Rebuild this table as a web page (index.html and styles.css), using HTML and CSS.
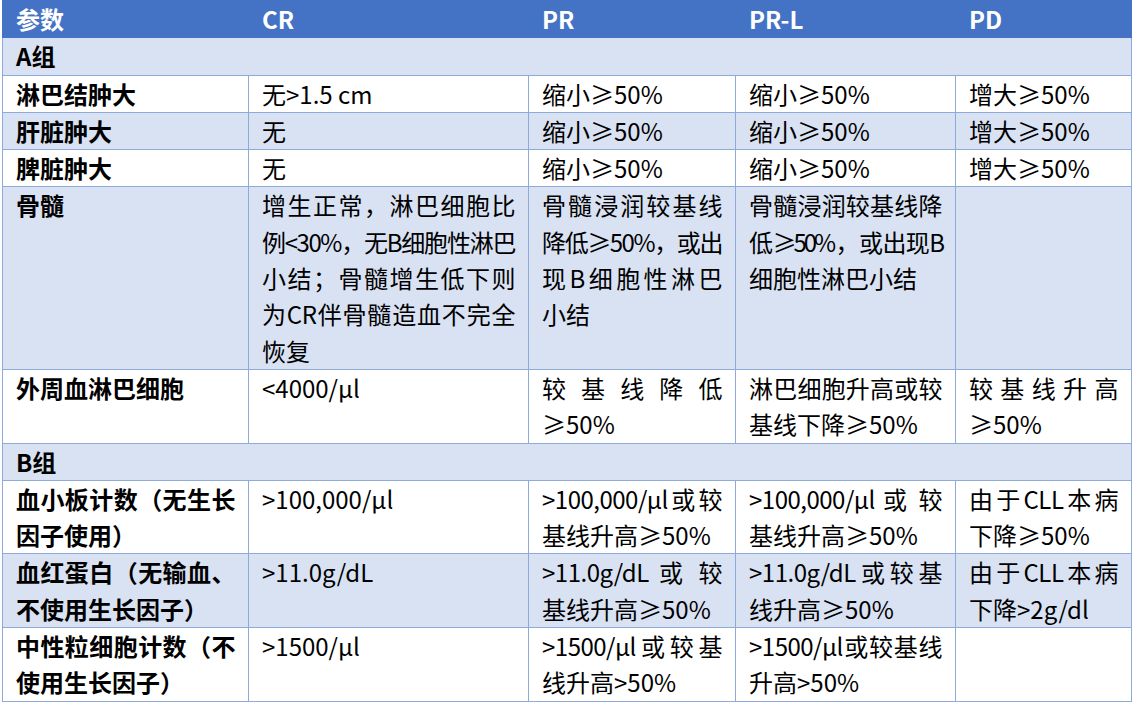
FILE: index.html
```html
<!DOCTYPE html>
<html lang="zh-CN">
<head>
<meta charset="utf-8">
<title>CLL 疗效标准</title>
<link rel="stylesheet" href="styles.css">
</head>
<body>
<table class="crit">
  <colgroup>
    <col class="c1"><col class="c2"><col class="c3"><col class="c4"><col class="c5">
  </colgroup>
  <thead>
    <tr><th>参数</th><th>CR</th><th>PR</th><th>PR-L</th><th>PD</th></tr>
  </thead>
  <tbody>
    <tr class="group"><td colspan="5">A组</td></tr>
    <tr><th>淋巴结肿大</th><td>无&gt;1.5 cm</td><td>缩小≥50%</td><td>缩小≥50%</td><td>增大≥50%</td></tr>
    <tr><th>肝脏肿大</th><td>无</td><td>缩小≥50%</td><td>缩小≥50%</td><td>增大≥50%</td></tr>
    <tr><th>脾脏肿大</th><td>无</td><td>缩小≥50%</td><td>缩小≥50%</td><td>增大≥50%</td></tr>
    <tr>
      <th>骨髓</th>
      <td><span class="l">增生正常，淋巴细胞比</span><span class="l t">例&lt;30%，无B细胞性淋巴</span><span class="l">小结；骨髓增生低下则</span><span class="l">为CR伴骨髓造血不完全</span><span class="l">恢复</span></td>
      <td><span class="l">骨髓浸润较基线</span><span class="l t">降低≥50%，或出</span><span class="l">现B细胞性淋巴</span><span class="l">小结</span></td>
      <td><span class="l">骨髓浸润较基线降</span><span class="l tt">低≥50%，或出现B</span><span class="l">细胞性淋巴小结</span></td>
      <td></td>
    </tr>
    <tr>
      <th>外周血淋巴细胞</th>
      <td>&lt;4000/μl</td>
      <td><span class="l">较基线降低</span><span class="l">≥50%</span></td>
      <td><span class="l">淋巴细胞升高或较</span><span class="l">基线下降≥50%</span></td>
      <td><span class="l">较基线升高</span><span class="l">≥50%</span></td>
    </tr>
    <tr class="group"><td colspan="5">B组</td></tr>
    <tr>
      <th><span class="l">血小板计数（无生长</span><span class="l">因子使用）</span></th>
      <td>&gt;100,000/μl</td>
      <td><span class="l">&gt;100,000/μl或较</span><span class="l">基线升高≥50%</span></td>
      <td><span class="l">&gt;100,000/μl 或 较</span><span class="l">基线升高≥50%</span></td>
      <td><span class="l">由于CLL本病</span><span class="l">下降≥50%</span></td>
    </tr>
    <tr>
      <th><span class="l">血红蛋白（无输血、</span><span class="l">不使用生长因子）</span></th>
      <td>&gt;11.0g/dL</td>
      <td><span class="l">&gt;11.0g/dL 或 较</span><span class="l">基线升高≥50%</span></td>
      <td><span class="l">&gt;11.0g/dL或较基</span><span class="l">线升高≥50%</span></td>
      <td><span class="l">由于CLL本病</span><span class="l">下降&gt;2g/dl</span></td>
    </tr>
    <tr>
      <th><span class="l">中性粒细胞计数（不</span><span class="l">使用生长因子）</span></th>
      <td>&gt;1500/μl</td>
      <td><span class="l">&gt;1500/μl或较基</span><span class="l">线升高&gt;50%</span></td>
      <td><span class="l">&gt;1500/μl或较基线</span><span class="l">升高&gt;50%</span></td>
      <td></td>
    </tr>
  </tbody>
</table>
</body>
</html>
```

FILE: styles.css
```css
html, body {
  margin: 0;
  background: #ffffff;
}

body {
  font-family: "Noto Sans CJK SC", "Noto Sans", sans-serif;
  font-size: 24px;
  color: #000000;
}

.crit {
  border-collapse: collapse;
  table-layout: fixed;
  width: 1129px;
  margin-left: 2px;
}

.c1 { width: 246px; }
.c2 { width: 280px; }
.c3 { width: 207px; }
.c4 { width: 220px; }
.c5 { width: 176px; }

.crit th,
.crit td {
  padding: 0 13px;
  line-height: 36.3px;
  text-align: justify;
  vertical-align: top;
  border: 1px solid #8eaadb;
  font-weight: 400;
}

.crit thead th {
  background: #4472c4;
  color: #ffffff;
  font-weight: 700;
  text-align: left;
  border-color: #4472c4;
}

.crit tbody th {
  font-weight: 700;
}

.crit tbody tr:nth-child(odd) {
  background: #d9e2f3;
}

.group td {
  font-weight: 700;
}

.l {
  display: block;
  text-align-last: justify;
  letter-spacing: -0.5px;
}

.l.t {
  letter-spacing: -1.5px;
}

.l.tt {
  letter-spacing: -3px;
}

.l:last-child {
  text-align-last: auto;
  letter-spacing: 0;
}
```
